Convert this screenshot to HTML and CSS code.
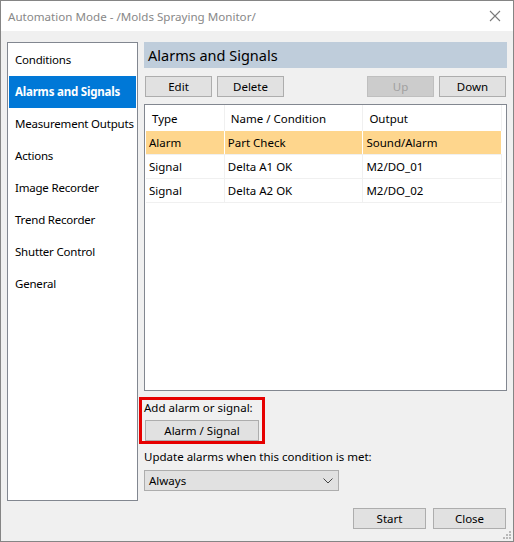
FILE: index.html
```html
<!DOCTYPE html>
<html>
<head>
<meta charset="utf-8">
<link rel="stylesheet" href="styles.css">
</head>
<body>
<div class="window">
  <div class="titlebar">
    <span class="title">Automation Mode - /Molds Spraying Monitor/</span>
    <svg class="close-x" width="12" height="12" viewBox="0 0 12 12"><path d="M1 1 L11 11 M11 1 L1 11" stroke="#7a7a7a" stroke-width="1.1" fill="none"/></svg>
  </div>
  <div class="content">
    <div class="top">
      <ul class="nav">
        <li>Conditions</li>
        <li class="active">Alarms and Signals</li>
        <li>Measurement Outputs</li>
        <li>Actions</li>
        <li>Image Recorder</li>
        <li>Trend Recorder</li>
        <li>Shutter Control</li>
        <li>General</li>
      </ul>
      <div class="main">
        <div class="section-header">Alarms and Signals</div>
        <div class="toolbar">
          <button class="btn w67">Edit</button>
          <button class="btn w67">Delete</button>
          <span class="spacer"></span>
          <button class="btn w67 disabled">Up</button>
          <button class="btn w67">Down</button>
        </div>
        <div class="table">
          <div class="row head">
            <div class="cell c1">Type</div>
            <div class="cell c2">Name / Condition</div>
            <div class="cell c3">Output</div>
          </div>
          <div class="row sel">
            <div class="cell c1">Alarm</div>
            <div class="cell c2">Part Check</div>
            <div class="cell c3">Sound/Alarm</div>
          </div>
          <div class="row">
            <div class="cell c1">Signal</div>
            <div class="cell c2">Delta A1 OK</div>
            <div class="cell c3">M2/DO_01</div>
          </div>
          <div class="row">
            <div class="cell c1">Signal</div>
            <div class="cell c2">Delta A2 OK</div>
            <div class="cell c3">M2/DO_02</div>
          </div>
        </div>
        <div class="add">
          <div class="label">Add alarm or signal:</div>
          <button class="btn add-btn">Alarm / Signal</button>
          <div class="highlight"></div>
        </div>
        <div class="label update-label">Update alarms when this condition is met:</div>
        <div class="select">
          <span>Always</span>
          <svg width="10" height="6" viewBox="0 0 10 6"><path d="M0.5 0.5 L5 5 L9.5 0.5" stroke="#444" stroke-width="1" fill="none"/></svg>
        </div>
      </div>
    </div>
    <div class="footer">
      <button class="btn w73">Start</button>
      <button class="btn w73">Close</button>
      <svg class="grip" width="8" height="8" viewBox="0 0 8 8" fill="#b8b8b8"><rect x="6" y="0" width="2" height="2"/><rect x="3" y="3" width="2" height="2"/><rect x="6" y="3" width="2" height="2"/><rect x="0" y="6" width="2" height="2"/><rect x="3" y="6" width="2" height="2"/><rect x="6" y="6" width="2" height="2"/></svg>
    </div>
  </div>
</div>
</body>
</html>
```

FILE: styles.css
```css
* { box-sizing: border-box; }
html, body { margin: 0; padding: 0; }
body {
  font-family: "Noto Sans", "Open Sans", sans-serif;
  font-size: 11.5px;
  color: #000;
  background: #f0f0f0;
}
.window {
  width: 514px;
  height: 542px;
  border: 1px solid #858585;
  background: #f0f0f0;
  display: flex;
  flex-direction: column;
}
.titlebar {
  height: 30px;
  background: #fff;
  display: flex;
  align-items: center;
  padding: 0 12px 0 7px;
  justify-content: space-between;
}
.title {
  color: #888888;
  font-size: 11.6px;
}
.content {
  flex: 1;
  display: flex;
  flex-direction: column;
  padding: 11px 6px 0 6px;
}
.top {
  display: flex;
  gap: 6px;
}
.nav {
  list-style: none;
  margin: 0;
  padding: 1px;
  width: 131px;
  height: 459px;
  background: #fff;
  border: 1px solid #828790;
  overflow: hidden;
}
.nav li {
  height: 32px;
  line-height: 32px;
  padding-left: 6px;
  white-space: nowrap;
  font-size: 11.5px;
  letter-spacing: -0.2px;
}
.nav li.active {
  background: #0078d7;
  color: #fff;
  font-weight: bold;
}
.main {
  width: 363px;
  display: flex;
  flex-direction: column;
}
.section-header {
  height: 26px;
  background: #bfcddb;
  font-size: 14.5px;
  line-height: 26px;
  padding-left: 4px;
}
.toolbar {
  display: flex;
  gap: 5px;
  margin-top: 8px;
  padding-left: 1px;
}
.spacer { flex: 1; }
.btn {
  font-family: inherit;
  font-size: 11.5px;
  height: 21px;
  background: #e1e1e1;
  border: 1px solid #adadad;
  padding: 0;
  color: #000;
  border-radius: 0;
}
.w67 { width: 67px; }
.w73 { width: 73px; }
.btn.disabled {
  background: #cccccc;
  border-color: #bfbfbf;
  color: #a0a0a0;
}
.toolbar .btn:last-child { margin-right: 1px; }
.table {
  margin-top: 7px;
  height: 287px;
  background: #fff;
  border: 1px solid #828790;
  padding: 0 4px 0 1px;
}
.row {
  display: flex;
  height: 24px;
  border-bottom: 1px solid #f0f0f0;
}
.row.head {
  height: 26px;
  border-bottom: none;
}
.row.sel { background: #fed68d; }
.row.sel .cell { border-right-color: #fff; }
.cell {
  line-height: 23px;
  padding-left: 3px;
  border-right: 1px solid #f0f0f0;
  white-space: nowrap;
}
.head .cell { line-height: 27px; padding-left: 6px; }
.c1 { width: 79px; }
.c2 { width: 139px; }
.c3 { width: 139px; }
.add {
  position: relative;
  margin-top: 6px;
  padding: 3px 0 0 0;
  height: 47px;
}
.label { line-height: 16px; white-space: nowrap; }
.add-btn {
  display: block;
  margin-top: 4px;
  margin-left: 1px;
  width: 114px;
}
.highlight {
  position: absolute;
  left: -5px;
  top: 0;
  width: 126px;
  height: 47px;
  border: 3px solid #e60000;
  pointer-events: none;
}
.update-label { margin-top: 5px; }
.select {
  margin-top: 5px;
  width: 195px;
  height: 21px;
  border: 1px solid #adadad;
  background: #e1e1e1;
  display: flex;
  align-items: center;
  justify-content: space-between;
  padding: 0 5px 0 4px;
}
.footer {
  display: flex;
  justify-content: flex-end;
  gap: 7px;
  margin-top: 7px;
  padding-right: 1px;
  position: relative;
}
.grip {
  position: absolute;
  right: -4px;
  top: 23px;
}
```
